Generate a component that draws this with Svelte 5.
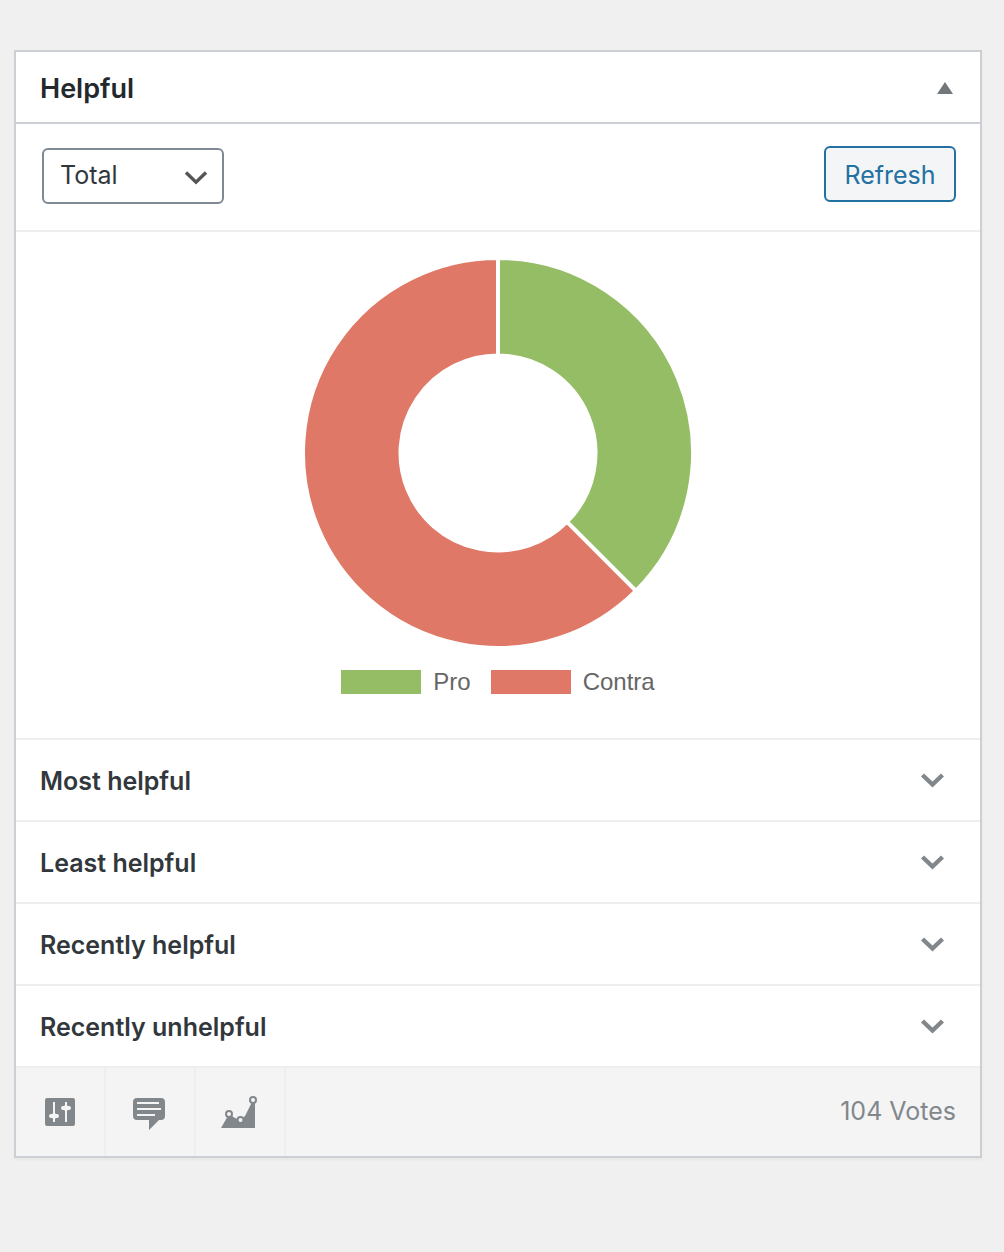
<script>
  let period = $state('total');
  let open = $state(true);

  const periods = [
    { value: 'total', label: 'Total' }
  ];

  const votes = [
    { label: 'Pro', count: 39, color: '#95bd66' },
    { label: 'Contra', count: 65, color: '#df7867' }
  ];

  const panels = ['Most helpful', 'Least helpful', 'Recently helpful', 'Recently unhelpful'];

  const total = votes.reduce((sum, vote) => sum + vote.count, 0);

  function point(radius, share) {
    const angle = share * 2 * Math.PI;
    return `${195 + radius * Math.sin(angle)} ${195 - radius * Math.cos(angle)}`;
  }

  function arc(from, to) {
    const large = to - from > 0.5 ? 1 : 0;
    return `M${point(195, from)} A195 195 0 ${large} 1 ${point(195, to)} L${point(97.5, to)} A97.5 97.5 0 ${large} 0 ${point(97.5, from)} Z`;
  }

  const slices = votes.map((vote, i) => {
    const before = votes.slice(0, i).reduce((sum, v) => sum + v.count, 0);
    return { color: vote.color, d: arc(before / total, (before + vote.count) / total) };
  });
</script>

<main>
  <section class="widget">
    <header class="widget-header">
      <h2>Helpful</h2>
      <button class="toggle" aria-label="Toggle panel" aria-expanded={open} onclick={() => (open = !open)}>
        <svg width="16" height="12" viewBox="0 0 16 12"><path d="M8 0 16 12H0z" fill="currentColor" /></svg>
      </button>
    </header>

    {#if open}
      <div class="filter">
        <div class="select-wrap">
          <select aria-label="Period" bind:value={period}>
            {#each periods as item}
              <option value={item.value}>{item.label}</option>
            {/each}
          </select>
          <svg class="arrow" width="24" height="16" viewBox="0 0 24 16">
            <path d="M2 2.5 12 12.2 22 2.5" fill="none" stroke="#555" stroke-width="3.4" />
          </svg>
        </div>
        <button class="refresh">Refresh</button>
      </div>

      <div class="chart">
        <svg width="390" height="390" viewBox="0 0 390 390" role="img" aria-label="Pro and contra votes">
          {#each slices as slice}
            <path d={slice.d} fill={slice.color} stroke="#fff" stroke-width="4" stroke-linejoin="bevel" />
          {/each}
        </svg>
        <ul class="legend">
          {#each votes as vote}
            <li><span class="swatch" style="background: {vote.color}"></span>{vote.label}</li>
          {/each}
        </ul>
      </div>

      {#each panels as panel}
        <button class="panel">
          {panel}
          <svg width="24" height="18" viewBox="0 0 24 18">
            <path d="M2.5 3 12.500 12.5 22.500 3" fill="none" stroke="#82878c" stroke-width="4.4" />
          </svg>
        </button>
      {/each}

      <footer>
        <a href="#settings" aria-label="Settings">
          <svg width="40" height="40" viewBox="0 0 40 40">
            <rect x="5" y="6" width="30" height="28" rx="2" fill="#82878c" />
            <path d="M14 10v20M26 10v20" stroke="#f4f4f4" stroke-width="2" />
            <rect x="9" y="22" width="10" height="4" rx="2" fill="#f4f4f4" />
            <rect x="12" y="21" width="4" height="6" rx="2" fill="#f4f4f4" />
            <rect x="21" y="14" width="10" height="4" rx="2" fill="#f4f4f4" />
            <rect x="24" y="13" width="4" height="6" rx="2" fill="#f4f4f4" />
          </svg>
        </a>
        <a href="#feedback" aria-label="Feedback">
          <svg width="40" height="40" viewBox="0 0 40 40">
            <path d="M7 6h24q4 0 4 4v14q0 4-4 4h-2L19 38V28H7q-4 0-4-4V10q0-4 4-4z" fill="#82878c" />
            <path d="M7 11h22M7 17h24M7 23h18" stroke="#f4f4f4" stroke-width="2" />
          </svg>
        </a>
        <a href="#stats" aria-label="Statistics">
          <svg width="40" height="40" viewBox="0 0 40 40">
            <path d="M1 36 9 22 15 26 20 28 25 24 32.500 9H35V36z" fill="#82878c" />
            <circle cx="9" cy="22" r="3" fill="#f4f4f4" stroke="#82878c" stroke-width="2" />
            <circle cx="20.500" cy="28" r="3" fill="#f4f4f4" stroke="#82878c" stroke-width="2" />
            <circle cx="33" cy="8" r="3" fill="#f4f4f4" stroke="#82878c" stroke-width="2" />
          </svg>
        </a>
        <span class="total">{total} Votes</span>
      </footer>
    {/if}
  </section>
</main>

<style>
  :global(body) {
    margin: 0;
    background: #f0f0f0;
  }
  main {
    padding: 50px 22px 50px 14px;
    font-family: Inter, "Liberation Sans", sans-serif;
    font-size: 25px;
    color: #32373c;
  }
  .widget {
    background: #fff;
    border: 2px solid #ccd0d4;
    box-shadow: 0 2px 2px rgba(0, 0, 0, 0.04);
  }
  button {
    font: inherit;
    cursor: pointer;
  }
  svg {
    display: block;
  }
  .widget-header {
    display: flex;
    align-items: center;
    justify-content: space-between;
    box-sizing: border-box;
    height: 72px;
    padding: 2px 23px 0 24px;
    border-bottom: 2px solid #ccd0d4;
  }
  h2 {
    margin: 0;
    font-size: 27px;
    font-weight: 600;
    color: #23282d;
  }
  .toggle {
    padding: 4px;
    border: 0;
    background: none;
    color: #72777c;
  }
  .filter {
    display: flex;
    align-items: flex-start;
    justify-content: space-between;
    padding: 22px 24px 26px 26px;
    border-bottom: 2px solid #eee;
  }
  .select-wrap {
    display: grid;
    align-items: center;
    margin-top: 2px;
  }
  select {
    grid-area: 1 / 1;
    appearance: none;
    box-sizing: border-box;
    width: 182px;
    height: 56px;
    padding: 0 48px 2px 16px;
    border: 2px solid #7e8993;
    border-radius: 6px;
    background: #fff;
    color: #32373c;
    font: inherit;
  }
  .arrow {
    grid-area: 1 / 1;
    justify-self: end;
    margin-right: 16px;
    margin-top: 4px;
    pointer-events: none;
  }
  .refresh {
    height: 56px;
    width: 132px;
    padding: 2px 0 0;
    border: 2px solid #2271a1;
    border-radius: 6px;
    background: #f3f5f6;
    color: #2271a1;
  }
  .chart {
    display: flex;
    flex-direction: column;
    align-items: center;
    gap: 22px;
    padding: 26px 0 44px;
  }
  .legend {
    display: flex;
    gap: 20px;
    margin: 0;
    padding: 0;
    list-style: none;
    font-family: "Liberation Sans", sans-serif;
    font-size: 24px;
    line-height: 24px;
    color: #666;
  }
  .legend li {
    display: flex;
    gap: 12px;
  }
  .swatch {
    width: 80px;
    height: 24px;
  }
  .panel {
    display: flex;
    align-items: center;
    justify-content: space-between;
    width: 100%;
    height: 82px;
    padding: 2px 36px 0 24px;
    border: 0;
    border-top: 2px solid #eee;
    background: none;
    color: #32373c;
    font-weight: 600;
  }
  .chart + .panel {
    border-top: 2px solid #eee;
  }
  footer {
    display: flex;
    align-items: center;
    border-top: 2px solid #eee;
    background: #f4f4f4;
  }
  footer a {
    padding: 24px;
    border-right: 2px solid #eee;
  }
  .total {
    margin-left: auto;
    padding: 0 24px 2px 0;
    color: #82878c;
  }
</style>
